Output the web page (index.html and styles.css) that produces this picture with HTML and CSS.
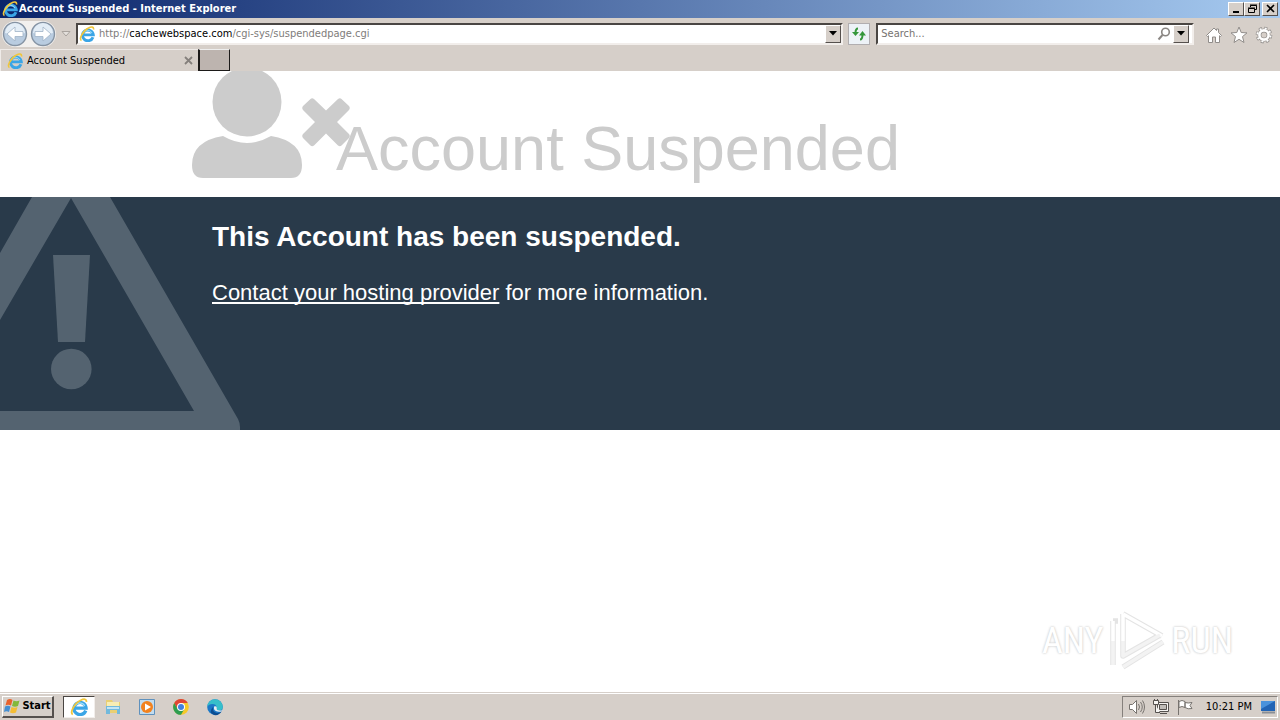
FILE: index.html
```html
<!DOCTYPE html>
<html lang="en">
<head>
<meta charset="utf-8">
<title>Account Suspended</title>
<link rel="stylesheet" href="styles.css">
</head>
<body>
<svg class="defs" aria-hidden="true">
  <defs>
    <symbol id="ie" viewBox="0 0 16 16">
      <path d="M14 11.200A5.400 5.400 0 1 1 14.300 8.900H5" fill="none" stroke="#3aa5e6" stroke-width="2.900"/>
      <path d="M4.300 7a5 5 0 0 1 8.800 0" fill="none" stroke="#9bdcf9" stroke-width="1"/>
      <path d="M2.500 14.600C-.5 13.500 3.500 5 9.500 2c3-1.600 5.500-1.200 5 1.500" fill="none" stroke="#f0c63c" stroke-width="1.600"/>
    </symbol>
  </defs>
</svg>

<header class="titlebar">
  <svg class="icon16"><use href="#ie"/></svg>
  <span class="caption">Account Suspended - Internet Explorer</span>
  <div class="winbtns">
    <button class="winbtn" aria-label="Minimize"><svg width="11" height="10"><path d="M2 7h6v2H2z"/></svg></button>
    <button class="winbtn" aria-label="Restore"><svg width="11" height="10" fill="none" stroke="#000"><path d="M3.500 3V1.500h6v4H8M3 1h7M1.500 4.500h6v4h-6zM1 4h7"/></svg></button>
    <button class="winbtn close" aria-label="Close"><svg width="11" height="10" stroke="#000" stroke-width="1.600"><path d="M2 1l7 7M9 1L2 8"/></svg></button>
  </div>
</header>

<nav class="toolbar">
  <div class="history">
    <button class="round" aria-label="Back"><svg width="26" height="26"><circle cx="13" cy="13" r="11.500" fill="#b9cce0" stroke="#8593a3" stroke-width="1.400"/><path d="M3 12a10 10 0 0 1 20 0q-10 3-20 0z" fill="#e3edf6"/><path d="M5 13l8-7v4.500h8v5h-8V20z" fill="#fff" stroke="#9fb2c6" stroke-width=".8"/></svg></button>
    <button class="round" aria-label="Forward"><svg width="26" height="26"><circle cx="13" cy="13" r="11.500" fill="#b9cce0" stroke="#8593a3" stroke-width="1.400"/><path d="M3 12a10 10 0 0 1 20 0q-10 3-20 0z" fill="#e3edf6"/><path d="M21 13l-8-7v4.500H5v5h8V20z" fill="#fff" stroke="#9fb2c6" stroke-width=".8"/></svg></button>
  </div>
  <button class="plain recent" aria-label="Recent pages"><svg width="10" height="8"><path d="M1 1.500h8L5 6z" fill="#e4e0dc" stroke="#a9a39e"/></svg></button>
  <div class="field address">
    <svg class="icon16"><use href="#ie"/></svg>
    <a class="url" href="#">http://<b>cachewebspace.com</b>/cgi-sys/suspendedpage.cgi</a>
    <button class="drop" aria-label="Show address list"><svg width="8" height="5"><path d="M0 0h8L4 4.500z"/></svg></button>
  </div>
  <button class="refresh" aria-label="Refresh"><svg width="16" height="16" fill="none" stroke="#35973b" stroke-width="2"><path d="M7 2.500Q4.500 2.500 4.500 7M9 13.500q2.500 0 2.500-5"/><path d="M1 6h7L4.500 10zM8 9.500h7L11.500 5z" fill="#35973b" stroke="none"/></svg></button>
  <div class="field search">
    <input type="text" placeholder="Search..." aria-label="Search">
    <svg width="14" height="14" fill="none" stroke="#8a8683"><circle cx="8.500" cy="5" r="3.800" stroke-width="1.600"/><path d="M5.500 8L1.500 12.500" stroke-width="2"/></svg>
    <button class="drop" aria-label="Search options"><svg width="8" height="5"><path d="M0 0h8L4 4.500z"/></svg></button>
  </div>
  <div class="commands">
    <button class="plain" aria-label="Home"><svg width="18" height="18" fill="#fff" stroke="#918d8a"><path d="M1.500 9.500L9 2l2.500 2.500V3h2v3.500l3 3-1 1-1-.8v6.800h-4V11h-3v5.500h-4V9.700l-1 .8z"/></svg></button>
    <button class="plain" aria-label="Favorites"><svg width="18" height="18" fill="#fff" stroke="#918d8a"><path d="M9 1l2.200 5.500 5.800.4-4.500 3.700L14 16.500l-5-3.200-5 3.200 1.500-5.900L1 6.900l5.800-.4z"/></svg></button>
    <button class="plain" aria-label="Tools"><svg width="18" height="18"><circle cx="9" cy="9" r="6.600" fill="none" stroke="#918d8a" stroke-width="3.400" stroke-dasharray="3 2.180"/><circle cx="9" cy="9" r="4.600" fill="none" stroke="#918d8a" stroke-width="4"/><circle cx="9" cy="9" r="6.600" fill="none" stroke="#fff" stroke-width="2" stroke-dasharray="2 3.180" stroke-dashoffset="-.5"/><circle cx="9" cy="9" r="4.600" fill="none" stroke="#fff" stroke-width="2.600"/></svg></button>
  </div>
</nav>

<div class="tabs">
  <div class="tab">
    <svg class="icon16"><use href="#ie"/></svg>
    <span class="tabname">Account Suspended</span>
    <button class="plain" aria-label="Close tab"><svg width="9" height="9" stroke="#85807c" stroke-width="1.800"><path d="M1 1l7 7M8 1L1 8"/></svg></button>
  </div>
  <button class="newtab" aria-label="New tab"></button>
</div>

<main class="page">
  <section class="hero">
    <svg class="user" width="158" height="112" viewBox="0 0 158 112" fill="#ccc" aria-hidden="true">
      <circle cx="55" cy="35" r="34.500"/>
      <path d="M31 69q24 14 48 0 31 5 31 29 0 13-11 13H11q-11 0-11-13 0-24 31-29z"/>
      <path d="M118.500 32q1.500-1.500 3.500 0L134 43.500 146 32q2-1.500 3.500 0l7.500 7q1.500 2 0 4L145 55l12 12q1.500 2 0 4l-7.500 7.500q-1.500 1.500-3.500 0L134 66.500 122 78.500q-2 1.500-3.500 0L111 71q-1.500-2 0-4l12-12-12-12q-1.500-2 0-4z"/>
    </svg>
    <h1>Account Suspended</h1>
  </section>
  <section class="notice">
    <svg class="warning" width="240" height="233" viewBox="0 0 240 233" fill="#546370" aria-hidden="true">
      <path d="M32 0h78l128 222q2 4 2 8v3H0v-19h194L71 1 0 123V56z"/>
      <path d="M53 58h37l-5 87H58z"/>
      <circle cx="71.300" cy="172" r="20.300"/>
    </svg>
    <h2>This Account has been suspended.</h2>
    <p><a href="#">Contact your hosting provider</a> for more information.</p>
  </section>
  <div class="watermark">
    <span>ANY</span>
    <svg width="58" height="62" viewBox="0 0 58 62" fill="none" stroke-linejoin="round">
      <g stroke="#e4e4e4" stroke-width="5.500"><path d="M15 4l39 22M15 4v42l37-21M5 11v44M15 57l40-25M5 11h5"/></g>
      <g stroke="#fff" stroke-width="3.500"><path d="M15 4l39 22M15 4v27M5 11v20"/></g>
      <g stroke="#f3f3f3" stroke-width="3.500"><path d="M15 31v15l37-21M5 31v24M15 57l40-25"/></g>
    </svg>
    <span>RUN</span>
  </div>
</main>

<footer class="taskbar">
  <button class="start"><svg width="17" height="16"><path d="M3 2q3-2 5.500 0L7 7.500q-3-1.500-5.500 0z" fill="#e9622c"/><path d="M9.500 2.500q3 1.500 6 0L14 8q-3 1.500-6 0z" fill="#83b83b"/><path d="M1 8.500q3-1.500 5.500 0L5 14q-2.500-1.500-5 0z" fill="#458fd2"/><path d="M7.500 9q3 1.500 6 0L12 14.500q-3 1.500-6 0z" fill="#f5bd35"/></svg>Start</button>
  <div class="apps">
    <button class="app active" aria-label="Internet Explorer"><svg width="18" height="18"><use href="#ie"/></svg></button>
    <button class="app" aria-label="File Explorer"><svg width="18" height="18"><path d="M2 2h6l1 2h7v11H2z" fill="#e9cf72"/><path d="M3 4h12v5H3z" fill="#f8edb3"/><path d="M2 8h14v8h-3v-4H6v4H2z" fill="#72b9dc"/><path d="M3 9h12v2H3z" fill="#c3e5f4"/></svg></button>
    <button class="app" aria-label="Media Player"><svg width="18" height="18"><path d="M1.500 1.500h15v15h-15z" fill="#c2dcef" stroke="#5f91bd"/><circle cx="9" cy="9" r="6" fill="#f2821f"/><path d="M7 5.500L13 9l-6 3.500z" fill="#fff"/></svg></button>
    <button class="app" aria-label="Chrome"><svg width="18" height="18"><circle cx="9" cy="9" r="7.800" fill="#f6c928"/><path d="M2.200 5.100A7.800 7.800 0 0 1 15.800 5.100H9L5.500 11z" fill="#df4535"/><path d="M2.200 5.100A7.800 7.800 0 0 0 9 16.800l3.400-5.800H5.600z" fill="#2f9d50"/><circle cx="9" cy="9" r="4" fill="#fff"/><circle cx="9" cy="9" r="3" fill="#4180df"/></svg></button>
    <button class="app" aria-label="Edge"><svg width="18" height="18"><circle cx="9" cy="9" r="7.800" fill="#1b78c7"/><path d="M1.200 9a7.800 7.800 0 0 1 15.600 0q0 3-3.500 3.500-4 0-2.500-2.500Q10.500 6 6.500 6 2.500 6 1.200 9z" fill="#36bfca"/><path d="M7 9q-1 5 4 6 3 0 5-2-3 5-8 4-6-3-1-8z" fill="#0c4d91"/><path d="M8 8.500q3-1 2.800 1.500-.8 2.500 3.200 2.500h2.500l-1 1q-6 1-7.500-2.500z" fill="#e6eef1"/></svg></button>
  </div>
  <div class="tray">
    <svg width="18" height="16" fill="none" stroke="#77736f"><path d="M1.500 5.500h3l4-4v13l-4-4h-3z" fill="#fff"/><path d="M10.500 5q2 3 0 6M12.500 3q3.500 5 0 10M14.500 1.500q4 6.500 0 13"/></svg>
    <svg width="18" height="16" fill="#f6f4f2" stroke="#55514e"><path d="M5.500 3.500h11v9h-11z"/><path d="M7.500 5.500h7v5h-7z" fill="#c0bcb8"/><path d="M8 14.500h7M1.500 1.500h5v4h-5zM3.500 5.500v8H8M2.500 0v2M5.500 0v2"/></svg>
    <svg width="18" height="16" fill="#fff" stroke="#77736f"><path d="M2.500 1v15M3 2.500q3-2 6 0v6q-3-2-6 0zM9 3.500q3 1 7 0l-2 3 2 3q-4 1-7-1z"/></svg>
    <time>10:21 PM</time>
    <svg width="16" height="16"><path d="M1 2h14v10H1z" fill="#2264b5"/><path d="M1 2h14L1 10z" fill="#4a92dc"/><path d="M2 13.500h13" stroke="#8a8f96" stroke-width="2"/></svg>
  </div>
</footer>
</body>
</html>
```
FILE: styles.css
```css
* { box-sizing: border-box; }
body {
  margin: 0;
  min-height: 100vh;
  display: flex;
  flex-direction: column;
  background: #fff;
  color: #000;
  font: 11px/14px Tahoma, "DejaVu Sans Condensed", "Noto Sans", sans-serif;
}
button { padding: 0; font: inherit; color: inherit; display: flex; align-items: center; justify-content: center; }
svg { flex: none; display: block; }
.defs { position: absolute; width: 0; height: 0; }
.icon16 { width: 16px; height: 16px; }
.plain { border: 0; background: none; }

.titlebar {
  display: flex;
  align-items: center;
  height: 18px;
  padding: 0 2px;
  color: #fff;
  background: linear-gradient(90deg, #0a246a, #a6caf0);
}
.caption { flex: 1; font-weight: bold; padding-left: 1px; white-space: nowrap; }
.winbtns { display: flex; }
.winbtn, .drop, .start {
  background: #d6cfc9;
  border: 1px solid;
  border-color: #fff #55504d #55504d #fff;
}
.winbtn { width: 16px; height: 14px; }
.close { margin-left: 2px; }

.toolbar {
  display: flex;
  align-items: center;
  height: 31px;
  padding: 0 7px 0 2px;
  background: #d6cfc9;
}
.history { display: flex; gap: 2px; background: #f2f0ee; border-radius: 13px; }
.round { border: 0; background: none; border-radius: 50%; }
.recent { width: 20px; }
.field {
  display: flex;
  align-items: center;
  height: 22px;
  background: #fff;
  border: 2px solid;
  border-color: #4a4643 #f2eeeb #f2eeeb #4a4643;
}
.address { flex: 1; padding-left: 1px; }
.url { flex: 1; padding-left: 4px; color: #807c7a; text-decoration: none; }
.url b { font-weight: normal; color: #000; }
.drop { width: 16px; height: 18px; }
.refresh { width: 22px; height: 22px; margin: 0 6px 0 5px; border: 1px solid #b1aeb0; background: #edf2f7; }
.search { width: 25%; padding: 0 3px 0 2px; gap: 2px; }
.search input { flex: 1; min-width: 0; border: 0; padding: 0 1px; font: inherit; outline: 0; background: none; }
.search input::placeholder { color: #767270; opacity: 1; }
.commands { display: flex; gap: 7px; padding: 2px 0 0 11px; }

.tabs { display: flex; height: 22px; background: #d6cfc9; }
.tab { display: flex; align-items: center; width: 198px; padding: 0 5px 0 6px; border-top: 1px solid #efebe8; border-left: 1px solid #efebe8; }
.tabname { flex: 1; padding-left: 4px; }
.newtab { width: 32px; height: 22px; background: #bdb4af; border: 1px solid #1c1a19; border-left-width: 2px; border-top-color: #eee; }

.page {
  flex: 1;
  position: relative;
  font-family: Arial, "Liberation Sans", sans-serif;
}
.hero { display: flex; height: 126px; padding-left: 15%; overflow: hidden; }
.user { margin-top: -4px; }
h1 { margin: 41px 0 0 -14px; font-size: 63px; line-height: 72px; font-weight: normal; color: #ccc; white-space: nowrap; }
.notice {
  position: relative;
  min-height: 233px;
  padding: 24px 15% 24px calc(15% + 20px);
  background: #293a4a;
  color: #fff;
}
.warning { position: absolute; left: 0; bottom: 0; }
h2 { position: relative; margin: 0 0 24px; font-size: 28px; line-height: 32px; }
.notice p { position: relative; margin: 0; font-size: 22px; line-height: 32px; }
.notice a { color: #fff; text-decoration-thickness: 2px; text-underline-offset: 2px; text-decoration-skip-ink: none; }
.watermark {
  position: absolute;
  right: 47px;
  bottom: 20px;
  display: flex;
  align-items: center;
  gap: 5px;
  font: 36px/40px "Roboto Condensed", Roboto, sans-serif;
  color: #fff;
  text-shadow: 0 0 2px #ccc, 0 0 3px #ddd;
}

.taskbar {
  display: flex;
  align-items: center;
  height: 28px;
  padding: 0 2px;
  background: #d6cfc9;
  border-top: 1px solid #d6cfc9;
  box-shadow: inset 0 1px #fff;
}
.start { width: 52px; height: 22px; gap: 1px; font-weight: bold; border-right-width: 2px; border-bottom-width: 2px; }
.apps { flex: 1; display: flex; gap: 2px; padding-left: 9px; }
.app { width: 32px; height: 22px; border: 1px solid transparent; background: none; }
.active { background: #fff; border-color: #4a4643 #f2eeeb #f2eeeb #4a4643; }
.tray { display: flex; align-items: center; gap: 6px; height: 22px; padding: 0 1px 0 5px; border: 1px solid; border-color: #85807c #fff #fff #85807c; }
time { padding: 0 2px 0 6px; white-space: nowrap; }
```
